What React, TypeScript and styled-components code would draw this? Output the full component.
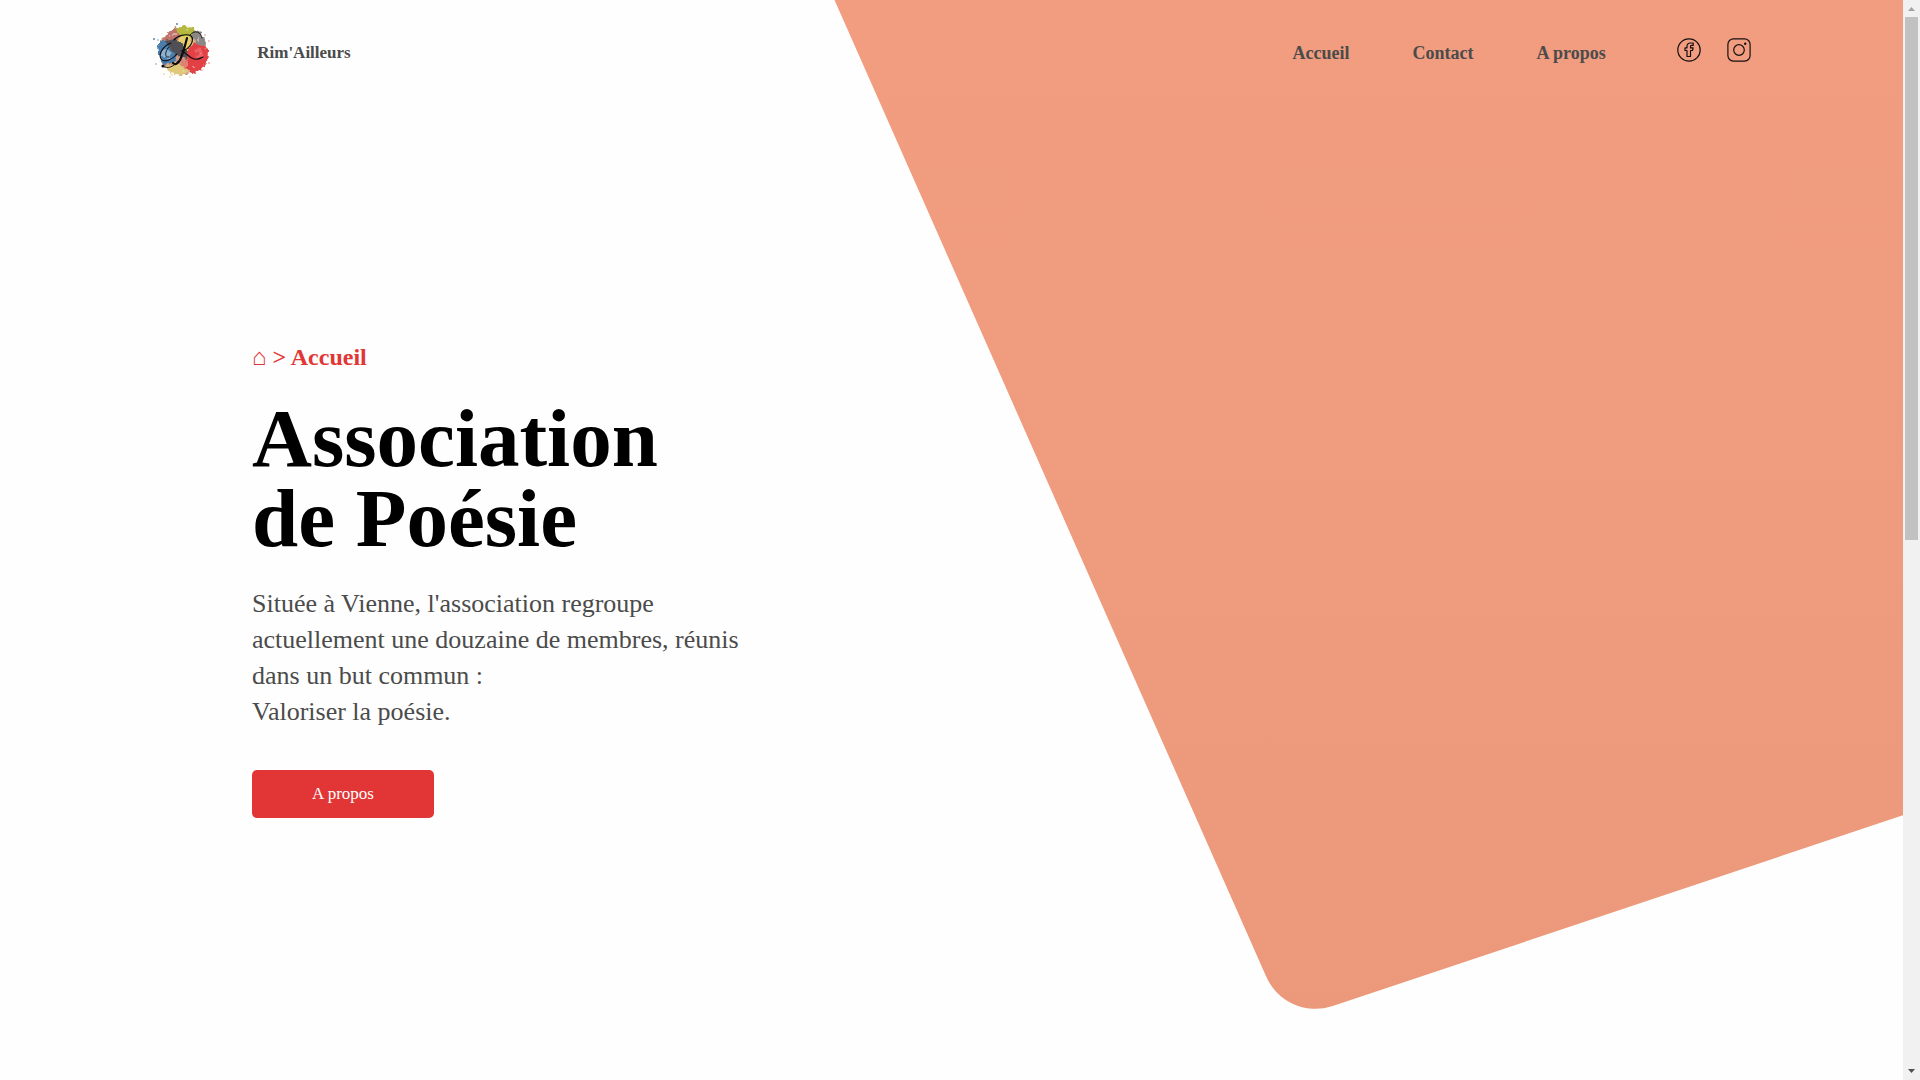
import React from "react";
import styled, { createGlobalStyle } from "styled-components";

const GlobalStyle = createGlobalStyle`
  * { box-sizing: border-box; }
  body {
    margin: 0;
    background: #fefefe;
    color: #4b4b4b;
    font-family: "Liberation Serif", "DejaVu Serif", serif;
  }
`;

const Shell = styled.div`
  display: grid;
  grid-template-columns: minmax(0, 1fr) 17px;
  min-height: 100vh;
`;

const Page = styled.div`
  position: relative;
  overflow: hidden;
`;

const Backdrop = styled.svg`
  position: absolute;
  inset: 0;
  width: 100%;
  height: 100%;
  z-index: -1;
`;

const Header = styled.header`
  display: flex;
  align-items: center;
  justify-content: space-between;
  height: 100px;
  padding: 0 8%;
`;

const Brand = styled.a`
  display: flex;
  align-items: center;
  gap: 45px;
  color: inherit;
  font-size: 17px;
  font-weight: 700;
  line-height: 24px;
  text-decoration: none;
`;

const BrandName = styled.span`
  padding-top: 5px;
`;

const Nav = styled.nav`
  display: flex;
  align-items: center;
  gap: 71px;
`;

const NavLinks = styled.div`
  display: flex;
  gap: 63px;
  padding-top: 5px;
`;

const NavLink = styled.a`
  color: inherit;
  font-size: 18px;
  font-weight: 700;
  line-height: 24px;
  text-decoration: none;
`;

const Socials = styled.div`
  display: flex;
  gap: 26px;
`;

const SocialLink = styled.a`
  display: flex;
  color: #141010;
`;

const Hero = styled.main`
  display: flex;
  flex-direction: column;
  align-items: flex-start;
  padding: 242px 252px 100px;
`;

const Breadcrumb = styled.div`
  margin-bottom: 26px;
  color: #e23636;
  font-size: 24px;
  font-weight: 700;
  line-height: 30px;
`;

const HomeLink = styled.a`
  color: inherit;
  font-weight: 400;
  text-decoration: none;
`;

const Title = styled.h1`
  margin: 0 0 28px;
  color: #000;
  font-size: 83px;
  font-weight: 700;
  line-height: 80px;
`;

const Lead = styled.p`
  margin: 0 0 40px;
  font-size: 26px;
  line-height: 36px;
`;

const Button = styled.button`
  width: 182px;
  height: 48px;
  border: 0;
  border-radius: 5px;
  background: #e23636;
  color: #fff;
  font: 400 17px/24px "Liberation Serif", serif;
`;

const Scrollbar = styled.div`
  display: flex;
  flex-direction: column;
  justify-content: space-between;
  align-items: center;
  height: 100vh;
  background: #f1f1f1;
`;

const Arrow = styled.svg`
  display: block;
  width: 17px;
  height: 17px;
`;

const Track = styled.div`
  flex: 1;
  width: 13px;
`;

const Thumb = styled.div`
  height: 50%;
  background: #c1c1c1;
`;

function Shape() {
  return (
    <Backdrop viewBox="0 0 1903 1080" preserveAspectRatio="xMaxYMin slice" aria-hidden="true">
      <defs>
        <linearGradient id="coral" x1="0" y1="0" x2="0" y2="1">
          <stop offset="0" stopColor="#f29d80" />
          <stop offset="1" stopColor="#ec997b" />
        </linearGradient>
      </defs>
      <path d="M834.5 0L1265.5 975A54 54 0 0 0 1332 1006.3L1903 815.3V0Z" fill="url(#coral)" />
    </Backdrop>
  );
}

function Logo() {
  return (
    <svg width="60" height="60" viewBox="0 0 60 60" aria-hidden="true">
      <defs>
        <filter id="splash" x="-10%" y="-10%" width="120%" height="120%">
          <feTurbulence type="fractalNoise" baseFrequency="0.22" numOctaves="2" seed="4" />
          <feDisplacementMap in="SourceGraphic" scale="7" xChannelSelector="R" yChannelSelector="G" />
        </filter>
      </defs>
      <g filter="url(#splash)">
        <circle cx="31" cy="31" r="24" fill="#cf9a86" />
        <path d="M12 19L16 11 24 7 27 18 22 25Z" fill="#c0736a" />
        <path d="M24 9L32 6 43 8 44 16 36 20 27 16Z" fill="#b5b93c" />
        <path d="M28 17L38 15 41 24 35 31 27 26Z" fill="#e6d06c" />
        <path d="M41 10L49 13 54 22 52 27 44 26 40 18Z" fill="#8a8785" />
        <path d="M36 29L42 24 51 25 56 32 55 43 48 51 38 53 33 42Z" fill="#e24144" />
        <path d="M42 28L50 29 53 36 46 39Z" fill="#ec6064" />
        <path d="M5 28L9 20 19 22 26 33 24 42 13 45 7 38Z" fill="#4b7dab" />
        <path d="M9 32L16 29 20 35 15 40Z" fill="#8db2cf" />
        <path d="M13 21L22 19 29 22 36 33 34 38 23 35Z" fill="#504f54" />
        <path d="M14 47L23 43 32 45 37 51 29 55 18 53Z" fill="#dfc878" />
        <path d="M28 39L36 41 36 48 29 47Z" fill="#df8070" />
        <g fill="#f6e8e0" opacity=".6">
          <circle cx="18" cy="16" r="1" /><circle cx="35" cy="11" r="1" /><circle cx="47" cy="35" r="1" />
          <circle cx="31" cy="51" r="1" /><circle cx="47" cy="20" r="1" /><circle cx="10" cy="35" r="1" />
          <circle cx="23" cy="13" r="1" /><circle cx="42" cy="46" r="1" />
        </g>
      </g>
      <g fill="#5d86ad"><circle cx="2" cy="19" r="1" /><circle cx="6" cy="20" r=".7" /><circle cx="25" cy="4" r="1" /><circle cx="4" cy="44" r=".7" /></g>
      <g fill="#df6a62"><circle cx="57" cy="21" r=".7" /><circle cx="57" cy="43" r=".8" /><circle cx="53" cy="15" r=".7" /></g>
      <g fill="#dbc374"><circle cx="12" cy="54" r=".8" /><circle cx="18" cy="57" r=".7" /><circle cx="38" cy="57" r=".7" /></g>
      <g fill="none" stroke="#0e0c10" strokeLinecap="round">
        <path d="M22 20C25 16 34 13 39 16C43 20 38 29 30 31C35 33 37 38 42 39C46 40 49 38 51 37" strokeWidth="1.2" />
        <path d="M35 18C33 26 31 34 28 40C26 44 23 45 21 43" strokeWidth="2.2" />
        <path d="M19 23C11 26 6 34 9 39C12 43 20 40 25 34" strokeWidth="1.1" />
        <path d="M17 27C13 31 12 38 17 37M38 15C43 9 49 12 50 18M11 46C15 50 23 46 26 41" strokeWidth=".9" />
      </g>
      <circle cx="11" cy="46" r="1.6" fill="#0e0c10" />
    </svg>
  );
}

function FacebookIcon() {
  return (
    <svg width="24" height="24" viewBox="0 0 24 24" fill="none" stroke="currentColor" strokeWidth="1.2" aria-hidden="true">
      <circle cx="12" cy="12" r="11.2" />
      <path d="M10 18.500h3.500V12.500h2l.6-2.600H13.500V8.300q0-.9 1-.9h1.700V5H13.500Q10 5 10 8.200v1.700H8V12.500h2Z" strokeLinejoin="round" />
    </svg>
  );
}

function InstagramIcon() {
  return (
    <svg width="24" height="24" viewBox="0 0 24 24" fill="none" stroke="currentColor" strokeWidth="1.2" aria-hidden="true">
      <rect x=".9" y=".9" width="22.2" height="22.2" rx="5.5" />
      <circle cx="12" cy="12" r="5.3" />
      <circle cx="18.2" cy="5.8" r="1.2" fill="currentColor" stroke="none" />
    </svg>
  );
}

export default function App() {
  return (
    <>
      <GlobalStyle />
      <Shell>
        <Page>
          <Shape />
          <Header>
            <Brand href="#accueil">
              <Logo />
              <BrandName>Rim'Ailleurs</BrandName>
            </Brand>
            <Nav>
              <NavLinks>
                <NavLink href="#accueil">Accueil</NavLink>
                <NavLink href="#contact">Contact</NavLink>
                <NavLink href="#apropos">A propos</NavLink>
              </NavLinks>
              <Socials>
                <SocialLink href="#facebook" aria-label="Facebook"><FacebookIcon /></SocialLink>
                <SocialLink href="#instagram" aria-label="Instagram"><InstagramIcon /></SocialLink>
              </Socials>
            </Nav>
          </Header>
          <Hero id="accueil">
            <Breadcrumb>
              <HomeLink href="#accueil">⌂</HomeLink> &gt; Accueil
            </Breadcrumb>
            <Title>
              Association
              <br />
              de Poésie
            </Title>
            <Lead>
              Située à Vienne, l'association regroupe
              <br />
              actuellement une douzaine de membres, réunis
              <br />
              dans un but commun :
              <br />
              Valoriser la poésie.
            </Lead>
            <Button type="button">A propos</Button>
          </Hero>
        </Page>
        <Scrollbar aria-hidden="true">
          <Arrow viewBox="0 0 17 17"><path d="M5 11L8.5 7L12 11Z" fill="#a3a3a3" /></Arrow>
          <Track><Thumb /></Track>
          <Arrow viewBox="0 0 17 17"><path d="M5 6L8.5 10L12 6Z" fill="#505050" /></Arrow>
        </Scrollbar>
      </Shell>
    </>
  );
}
